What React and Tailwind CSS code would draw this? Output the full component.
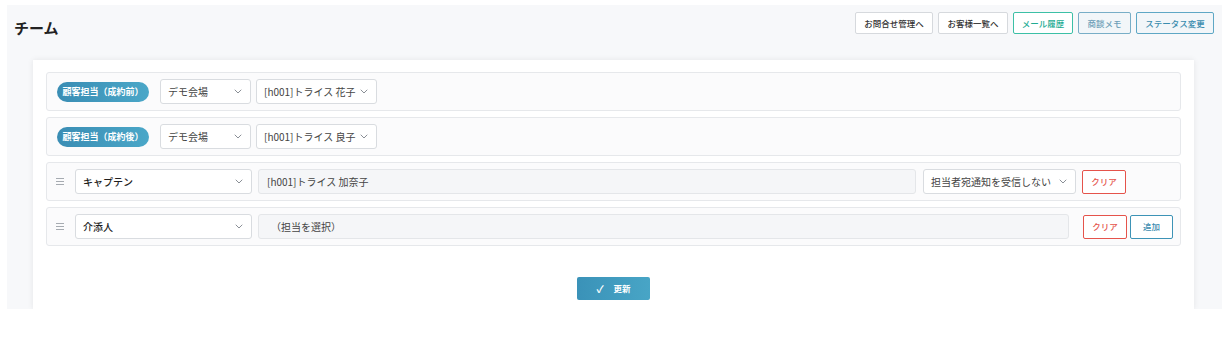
import React from "react";

const font = { fontFamily: '"Noto Sans CJK JP", "Noto Sans", sans-serif' };

function Chevron() {
  return (
    <svg width="8" height="5" viewBox="0 0 8 5" fill="none" className="shrink-0">
      <path d="M1 1l3 3 3-3" stroke="#8a8f96" strokeWidth="1" strokeLinecap="round" strokeLinejoin="round" />
    </svg>
  );
}

function Select({ w, label, dark }) {
  return (
    <div
      className={`${w} h-[25px] shrink-0 flex items-center justify-between pl-[7px] pr-[8px] bg-white border border-[#d9dce0] rounded-[3px] text-[10px] ${dark ? "text-[#1f1f1f] font-medium" : "text-[#444]"}`}
    >
      <span className="whitespace-nowrap">{label}</span>
      <Chevron />
    </div>
  );
}

function Handle() {
  return (
    <svg width="8" height="7" viewBox="0 0 8 7" className="shrink-0">
      <rect x="0" y="0" width="8" height="1" fill="#a6abb1" />
      <rect x="0" y="3" width="8" height="1" fill="#a6abb1" />
      <rect x="0" y="6" width="8" height="1" fill="#a6abb1" />
    </svg>
  );
}

function Badge({ children }) {
  return (
    <div className="w-[92px] h-[20px] shrink-0 rounded-full bg-gradient-to-r from-[#3a8db4] to-[#4aa7c8] text-white text-[9px] font-bold flex items-center justify-center whitespace-nowrap">
      {children}
    </div>
  );
}

function ClearBtn() {
  return (
    <div className="w-[44px] h-[24px] shrink-0 border border-[#e5534b] rounded-[2px] bg-white text-[#e5534b] text-[8.5px] font-medium flex items-center justify-center">
      クリア
    </div>
  );
}

export default function App() {
  return (
    <div className="w-[1225px] h-[345px] bg-white overflow-hidden" style={font}>
      <div className="ml-[7px] mr-[3px] mt-[5px] h-[304px] bg-[#f7f8fa] overflow-hidden flex flex-col">
        <div className="flex items-start justify-between pl-[7px] pr-[8px] pt-[7px]">
          <h1 className="text-[15px] font-bold text-[#222] mt-[5px] leading-[22px]">チーム</h1>
          <div className="flex gap-[5px] text-[8.5px] font-medium">
            <div className="w-[78px] h-[22px] border border-[#d6d9dd] bg-white rounded-[2px] flex items-center justify-center text-[#333]">お問合せ管理へ</div>
            <div className="w-[70px] h-[22px] border border-[#d6d9dd] bg-white rounded-[2px] flex items-center justify-center text-[#333]">お客様一覧へ</div>
            <div className="w-[60px] h-[22px] border border-[#3cc0a6] bg-white rounded-[2px] flex items-center justify-center text-[#22ab92]">メール履歴</div>
            <div className="w-[53px] h-[22px] border border-[#78aec7] bg-[#f2f6f9] rounded-[2px] flex items-center justify-center text-[#6e9fb8]">商談メモ</div>
            <div className="w-[78px] h-[22px] border border-[#5ea7c5] bg-[#f2f6f9] rounded-[2px] flex items-center justify-center text-[#3a8cae]">ステータス変更</div>
          </div>
        </div>

        <div className="ml-[26px] mr-[28px] mt-[21px] flex-1 bg-white shadow-[0_0_6px_rgba(0,0,0,0.08)] px-[13px] pt-[12px] flex flex-col">
          <div className="flex flex-col gap-[6px]">
            <div className="h-[39px] border border-[#e6e8eb] bg-[#fbfbfc] rounded-[3px] flex items-center pl-[10px]">
              <Badge>顧客担当（成約前）</Badge>
              <div className="ml-[11px]"><Select w="w-[91px]" label="デモ会場" /></div>
              <div className="ml-[5px]"><Select w="w-[121px]" label="[h001]トライス 花子" /></div>
            </div>
            <div className="h-[39px] border border-[#e6e8eb] bg-[#fbfbfc] rounded-[3px] flex items-center pl-[10px]">
              <Badge>顧客担当（成約後）</Badge>
              <div className="ml-[11px]"><Select w="w-[91px]" label="デモ会場" /></div>
              <div className="ml-[5px]"><Select w="w-[121px]" label="[h001]トライス 良子" /></div>
            </div>
            <div className="h-[39px] border border-[#e6e8eb] bg-[#fbfbfc] rounded-[3px] flex items-center pl-[9px] pr-[54px]">
              <Handle />
              <div className="ml-[11px]"><Select w="w-[177px]" label="キャプテン" dark /></div>
              <div className="ml-[6px] flex-1 h-[25px] bg-[#f5f6f8] border border-[#e4e6e9] rounded-[3px] flex items-center pl-[8px] text-[10px] text-[#444]">
                [h001]トライス 加奈子
              </div>
              <div className="ml-[7px]"><Select w="w-[153px]" label="担当者宛通知を受信しない" /></div>
              <div className="ml-[6px]"><ClearBtn /></div>
            </div>
            <div className="h-[39px] border border-[#e6e8eb] bg-[#fbfbfc] rounded-[3px] flex items-center pl-[9px] pr-[7px]">
              <Handle />
              <div className="ml-[11px]"><Select w="w-[177px]" label="介添人" dark /></div>
              <div className="ml-[6px] flex-1 h-[25px] bg-[#f5f6f8] border border-[#e4e6e9] rounded-[3px] flex items-center pl-[12px] text-[10px] text-[#444]">
                （担当を選択）
              </div>
              <div className="ml-[14px]"><ClearBtn /></div>
              <div className="ml-[3px] w-[43px] h-[24px] shrink-0 border border-[#3d93b6] rounded-[2px] bg-white text-[#3d8db0] text-[8.5px] font-medium flex items-center justify-center">
                追加
              </div>
            </div>
          </div>
          <div className="flex justify-center mt-[31px]">
            <div className="w-[73px] h-[23px] rounded-[2px] bg-gradient-to-r from-[#3a92b8] to-[#48a5c6] text-white text-[8.5px] font-bold flex items-center justify-center gap-[10px]">
              <span className="text-[10px]">✓</span>
              <span>更新</span>
            </div>
          </div>
        </div>
      </div>
    </div>
  );
}
